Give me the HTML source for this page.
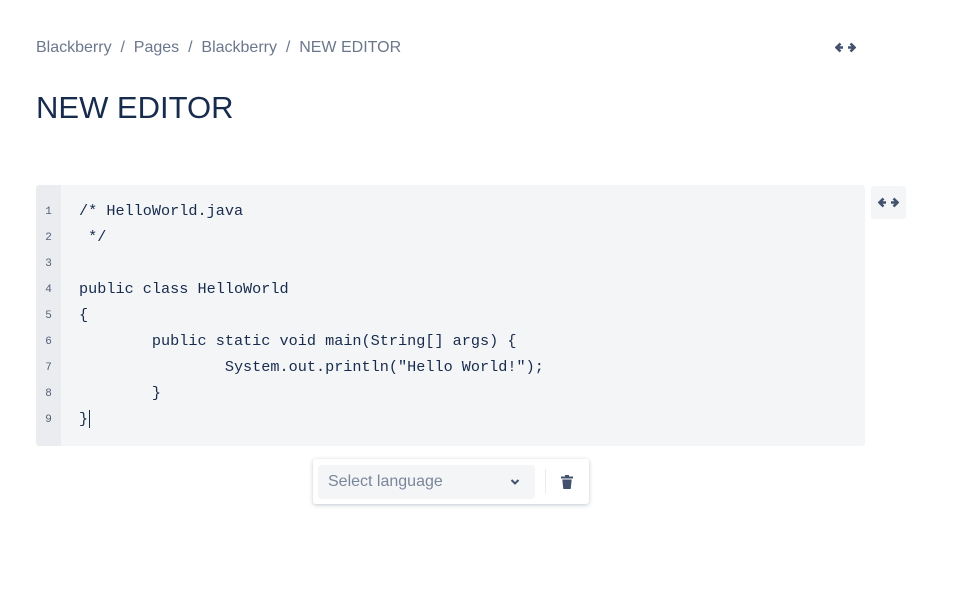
<!DOCTYPE html>
<html><head><style>
body{margin:0;width:968px;height:594px;background:#fff;font-family:"Liberation Sans",sans-serif;position:relative;overflow:hidden}
.bc{position:absolute;left:36px;top:39px;font-size:16px;color:#6b778c;white-space:pre}
h1{position:absolute;left:36px;top:90px;margin:0;font-size:31px;font-weight:400;color:#172b4d}
.code{position:absolute;left:36px;top:185px;width:829px;height:261px;background:#f4f5f7;border-radius:3px;overflow:hidden}
.gut{position:absolute;left:0;top:0;width:25px;height:100%;background:#ebecf0}
.ln{height:26px;line-height:26px;font-family:"Liberation Mono",monospace;font-size:11px;color:#505f79;text-align:center}
pre{position:absolute;left:79px;top:198px;margin:0;font-family:"Liberation Mono",monospace;font-size:15.2px;line-height:26px;color:#172b4d;tab-size:8}
.tb{position:absolute;left:313px;top:459px;width:276px;height:45px;background:#fff;border-radius:3px;box-shadow:0 1px 4px rgba(9,30,66,.25)}
.sel{position:absolute;left:5px;top:6px;width:217px;height:34px;background:#f4f5f7;border-radius:3px;font-size:16px;color:#7a869a;line-height:34px;text-indent:10px}
.div{position:absolute;left:232px;top:10px;width:1px;height:25px;background:#ebecf0}
.exp{position:absolute;left:871px;top:186px;width:35px;height:33px;background:#f4f5f7;border-radius:3px}
</style></head><body>
<div class="bc">Blackberry  /  Pages  /  Blackberry  /  NEW EDITOR</div>
<svg style="position:absolute;left:835px;top:41px" width="21" height="13" viewBox="0 0 21 13"><path d="M2 6.5h6M5.5 2.5L1.5 6.5l4 4M19 6.5h-6M15.5 2.5l4 4-4 4" stroke="#42526e" stroke-width="2.6" fill="none"/></svg>
<h1>NEW EDITOR</h1>
<div class="code"><div class="gut"></div></div>
<div style="position:absolute;left:36px;top:199px;width:25px"><div class="ln">1</div><div class="ln">2</div><div class="ln">3</div><div class="ln">4</div><div class="ln">5</div><div class="ln">6</div><div class="ln">7</div><div class="ln">8</div><div class="ln">9</div></div>
<pre>/* HelloWorld.java
 */

public class HelloWorld
{
	public static void main(String[] args) {
		System.out.println("Hello World!");
	}
}<span style="border-left:1px solid #172b4d;margin-left:1px"></span></pre>
<div class="exp"><svg style="position:absolute;left:7px;top:10px" width="21" height="13" viewBox="0 0 21 13"><path d="M2 6.5h6M5.5 2.5L1.5 6.5l4 4M19 6.5h-6M15.5 2.5l4 4-4 4" stroke="#42526e" stroke-width="2.6" fill="none"/></svg></div>
<div class="tb"><div class="sel">Select language<svg style="position:absolute;left:192px;top:13px" width="10" height="8" viewBox="0 0 10 8"><path d="M1.5 2l3.5 3.5L8.5 2" stroke="#42526e" stroke-width="2" fill="none"/></svg></div><div class="div"></div>
<svg style="position:absolute;left:247px;top:15px" width="14" height="16" viewBox="0 0 14 16"><path d="M1 2.5h12v2H1zM5 1h4v2H5zM2.3 5.5h9.4l-1 9.5H3.3z" fill="#42526e"/></svg></div>
</body></html>
